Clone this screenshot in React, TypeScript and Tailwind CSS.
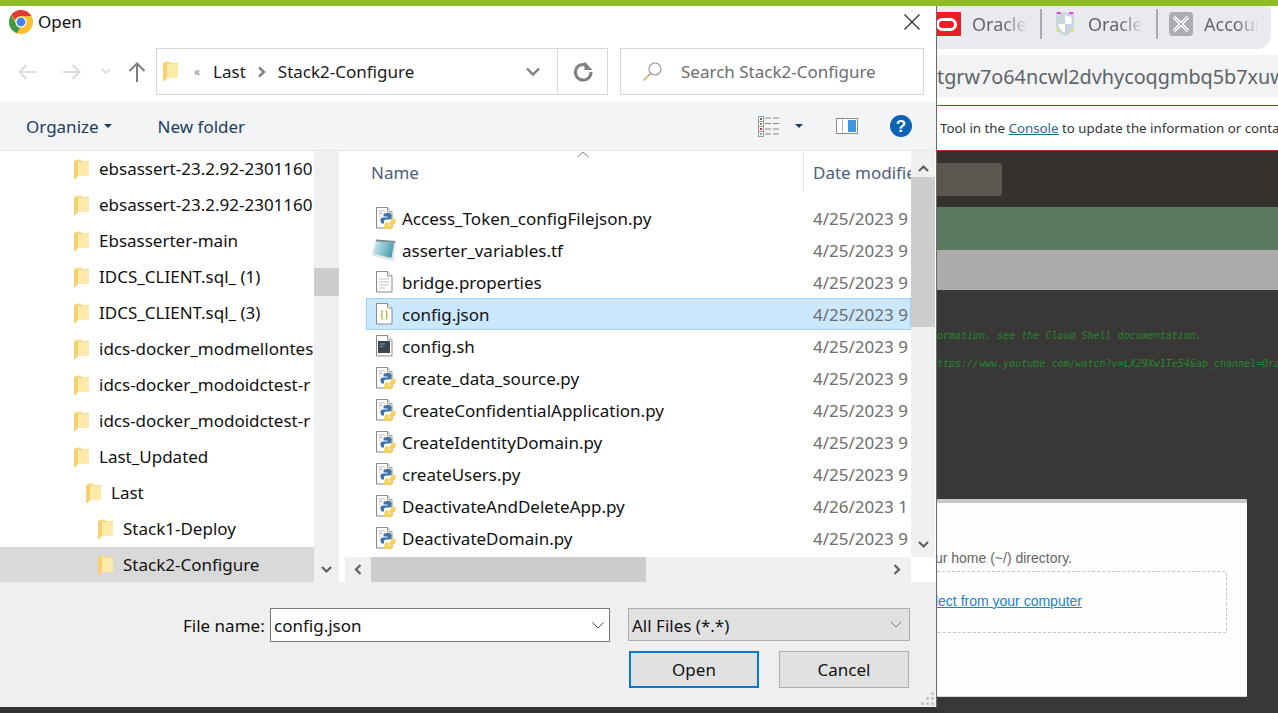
const treeItems = [
  { name: "ebsassert-23.2.92-2301160", indent: 0 },
  { name: "ebsassert-23.2.92-2301160", indent: 0 },
  { name: "Ebsasserter-main", indent: 0 },
  { name: "IDCS_CLIENT.sql_ (1)", indent: 0 },
  { name: "IDCS_CLIENT.sql_ (3)", indent: 0 },
  { name: "idcs-docker_modmellontes", indent: 0 },
  { name: "idcs-docker_modoidctest-r", indent: 0 },
  { name: "idcs-docker_modoidctest-r", indent: 0 },
  { name: "Last_Updated", indent: 0 },
  { name: "Last", indent: 1 },
  { name: "Stack1-Deploy", indent: 2 },
  { name: "Stack2-Configure", indent: 2, selected: true },
];

const files = [
  { name: "Access_Token_configFilejson.py", date: "4/25/2023 9", kind: "py" },
  { name: "asserter_variables.tf", date: "4/25/2023 9", kind: "tf" },
  { name: "bridge.properties", date: "4/25/2023 9", kind: "txt" },
  { name: "config.json", date: "4/25/2023 9", kind: "json", selected: true },
  { name: "config.sh", date: "4/25/2023 9", kind: "sh" },
  { name: "create_data_source.py", date: "4/25/2023 9", kind: "py" },
  { name: "CreateConfidentialApplication.py", date: "4/25/2023 9", kind: "py" },
  { name: "CreateIdentityDomain.py", date: "4/25/2023 9", kind: "py" },
  { name: "createUsers.py", date: "4/25/2023 9", kind: "py" },
  { name: "DeactivateAndDeleteApp.py", date: "4/26/2023 1", kind: "py" },
  { name: "DeactivateDomain.py", date: "4/25/2023 9", kind: "py" },
];

function ChromeIcon() {
  return (
    <svg width="24" height="24" viewBox="0 0 24 24" className="shrink-0">
      <circle cx="12" cy="12" r="12" fill="#fbc02d" />
      <path d="M12 0a12 12 0 0 1 10.400 6H12a6 6 0 0 0-5.600 3.800L2.300 4.900A12 12 0 0 1 12 0z" fill="#e53935" />
      <path d="M2.300 4.900l4.600 8.600a5.500 5.500 0 0 0 4 4.300L8 23.300A12 12 0 0 1 2.300 4.900z" fill="#3d9b46" />
      <circle cx="12" cy="12" r="5.600" fill="#fff" />
      <circle cx="12" cy="12" r="4.400" fill="#3f82ee" />
    </svg>
  );
}

function FolderIcon() {
  return (
    <svg width="15" height="21" viewBox="0 0 15 21" className="shrink-0">
      <path d="M3 .5h4l1 1.500h7v15H3z" fill="#f7dc8e" />
      <path d="M4 3h11v14H4z" fill="#fde9a8" />
      <path d="M0 2 4 .5V17L1 20.500 0 20z" fill="#f6d170" />
    </svg>
  );
}

function PageOutline({ children }: { children?: React.ReactNode }) {
  return (
    <svg width="24" height="24" viewBox="0 0 24 24" className="shrink-0">
      <path d="M2.500 1.500h11l4.500 4.500v16H2.500z" fill="#fff" stroke="#8a8a8a" />
      <path d="M13.500 1.500v4.500h4.500" fill="#f0f0f0" stroke="#9a9a9a" />
      {children}
    </svg>
  );
}

const PY_HALF =
  "M13.500 8c-2 0-3 .7-3 2v1.500h4v1H9.500c-1.500 0-2 1.200-2 3s.7 3 2 3H11v-2c0-1.200.8-2 2-2h3.500c1 0 2-.8 2-2V10c0-1.300-1.500-2-3-2z";

function FileIcon({ kind }: { kind: string }) {
  if (kind === "py") {
    return (
      <PageOutline>
        <path d="M5 5h6M5 7.500h4M5 10h2" stroke="#b4b4b4" />
        <g transform="translate(-1 -1)">
          <path d={PY_HALF} fill="#3a74a8" />
          <path d={PY_HALF} fill="#f7d34a" transform="rotate(180 15 16)" />
        </g>
      </PageOutline>
    );
  }
  if (kind === "tf") {
    return (
      <svg width="26" height="24" viewBox="0 0 26 24" className="shrink-0 -ml-[2px]">
        <defs>
          <linearGradient id="pad" x1="0" y1="0" x2="1" y2="0.300">
            <stop offset="0" stopColor="#cdeef0" />
            <stop offset="1" stopColor="#4f9fb2" />
          </linearGradient>
        </defs>
        <path d="M4 2 23.500 3.500 21 23 .5 17z" fill="#e6e9ea" stroke="#c3cdd0" strokeWidth="0.500" />
        <path d="M4.500 3.500 22 5 19.500 20 2 16z" fill="url(#pad)" />
        <path d="M4 1.500 23.500 3 23 5 4 3.500z" fill="#7b8f96" />
      </svg>
    );
  }
  if (kind === "txt") {
    return (
      <PageOutline>
        <path d="M5 9h10M5 12h10M5 15h10M5 18h6" stroke="#c4c4c4" />
      </PageOutline>
    );
  }
  if (kind === "json") {
    return (
      <PageOutline>
        <path
          d="M9 8.500c-1.500 0-1 1.300-1 2.400 0 1-.4 1.700-1.200 1.900.8.200 1.200.9 1.200 1.900s-.5 2.400 1 2.400M11.500 8.500c1.500 0 1 1.300 1 2.400 0 1 .4 1.700 1.200 1.900-.8.200-1.200.9-1.200 1.900s.5 2.400-1 2.400"
          fill="none"
          stroke="#b5b02a"
          strokeWidth="1.200"
        />
      </PageOutline>
    );
  }
  return (
    <PageOutline>
      <path d="M4 7h12v12H4z" fill="#37474f" />
      <path d="M6 10h5M6 12.500h3" stroke="#90a4ae" />
    </PageOutline>
  );
}

function Chevron({ dir, color = "#606060" }: { dir: "up" | "down" | "left" | "right"; color?: string }) {
  const d = {
    up: "M2 8l4.500-4.500L11 8",
    down: "M2 4l4.500 4.500L11 4",
    left: "M8.500 2 4 6.500 8.500 11",
    right: "M4.500 2 9 6.500 4.500 11",
  }[dir];
  return (
    <svg width="13" height="13" viewBox="0 0 13 13" className="shrink-0">
      <path d={d} fill="none" stroke={color} strokeWidth="2.200" />
    </svg>
  );
}

function NavBar() {
  return (
    <div className="h-[47px] flex items-center">
      <svg width="20" height="18" viewBox="0 0 20 18" className="ml-[17px]">
        <path d="M19 9H3M9.500 2 2.500 9l7 7" fill="none" stroke="#dcdcdc" strokeWidth="2" />
      </svg>
      <svg width="20" height="18" viewBox="0 0 20 18" className="ml-[25px]">
        <path d="M1 9h16M10.500 2l7 7-7 7" fill="none" stroke="#dcdcdc" strokeWidth="2" />
      </svg>
      <svg width="10" height="7" viewBox="0 0 10 7" className="ml-[19px]">
        <path d="M1 1l4 4 4-4" fill="none" stroke="#dcdcdc" strokeWidth="1.800" />
      </svg>
      <svg width="18" height="22" viewBox="0 0 18 22" className="ml-[17px]">
        <path d="M9 21V3M1.500 10 9 2.500 16.500 10" fill="none" stroke="#808080" strokeWidth="2" />
      </svg>
      <div className="ml-[10px] w-[452px] h-[47px] border border-[#d9d9d9] flex items-center">
        <div className="ml-[6px]">
          <FolderIcon />
        </div>
        <span className="ml-[16px] text-[12px] text-[#808080] leading-none">«</span>
        <span className="ml-[13px] text-[#1a1a1a]">Last</span>
        <svg width="10" height="12" viewBox="0 0 10 12" className="ml-[11px]">
          <path d="M2 1.500 7 6l-5 4.500" fill="none" stroke="#808080" strokeWidth="2.400" />
        </svg>
        <span className="ml-[11px] text-[#1a1a1a]">Stack2-Configure</span>
        <svg width="14" height="10" viewBox="0 0 14 10" className="ml-auto mr-[17px]">
          <path d="M1 1.500 7 7.500l6-6" fill="none" stroke="#808080" strokeWidth="2.400" />
        </svg>
        <div className="w-[50px] h-full border-l border-[#d9d9d9] flex items-center justify-center">
          <svg width="22" height="22" viewBox="0 0 22 22">
            <path d="M14.500 4.200A7.800 7.800 0 1 0 19 11" fill="none" stroke="#808080" strokeWidth="3" />
            <path d="M12.500 .5v8.500h8z" fill="#808080" />
          </svg>
        </div>
      </div>
      <div className="ml-[12px] w-[304px] h-[47px] border border-[#d9d9d9] flex items-center">
        <svg width="21" height="21" viewBox="0 0 21 21" className="ml-[21px]">
          <circle cx="13" cy="8" r="6" fill="none" stroke="#9a9a9a" strokeWidth="1.200" />
          <path d="M8.500 12.500 1.500 19.500" stroke="#d9a06a" strokeWidth="1.600" />
        </svg>
        <span className="ml-[18px] text-[#6d6d6d]">Search Stack2-Configure</span>
      </div>
    </div>
  );
}

function Toolbar() {
  return (
    <div className="h-[49px] bg-[#f3f4f6] border-b border-[#e6e6e6] flex items-center">
      <span className="ml-[26px] pt-[2px] text-[#1e3a5f]">Organize</span>
      <span className="ml-[5px] w-0 h-0 border-x-[4px] border-x-transparent border-t-[4px] border-t-[#1e3a5f]" />
      <span className="ml-[46px] pt-[2px] text-[#1e3a5f]">New folder</span>
      <svg width="23" height="21" viewBox="0 0 23 21" className="ml-auto">
        <rect x="0.500" y="0.500" width="5" height="5" fill="#fff" stroke="#9a9a9a" />
        <rect x="0.500" y="5.500" width="5" height="5" fill="#fff" stroke="#9a9a9a" />
        <rect x="0.500" y="10.500" width="5" height="5" fill="#fff" stroke="#9a9a9a" />
        <rect x="0.500" y="15.500" width="5" height="5" fill="#fff" stroke="#9a9a9a" />
        <rect x="2" y="2" width="2" height="2" fill="#3a74a8" />
        <rect x="2" y="7" width="2" height="2" fill="#8f8f2a" />
        <rect x="2" y="12" width="2" height="2" fill="#b03a2e" />
        <rect x="2" y="17" width="2" height="2" fill="#8aa08a" />
        <path d="M7 2h6M15 2h6M7 7.500h6M15 7.500h6M7 13h6M15 13h6M7 18h6M15 18h6" stroke="#8a8a8a" />
      </svg>
      <span className="ml-[14px] w-0 h-0 border-x-[4px] border-x-transparent border-t-[4px] border-t-[#1e3a5f]" />
      <svg width="22" height="16" viewBox="0 0 22 16" className="ml-[33px]">
        <rect x="0.500" y="0.500" width="21" height="15" fill="#fff" stroke="#8c8c8c" />
        <rect x="12" y="2" width="8" height="12" fill="#3d97e0" />
        <path d="M6.500 1v14" stroke="#b8b8b8" />
      </svg>
      <div className="ml-[32px] mr-[24px] w-[22px] h-[22px] rounded-full bg-[#0b63b5] flex items-center justify-center text-white text-[17px] font-bold font-['Liberation_Sans',sans-serif] leading-none">
        ?
      </div>
    </div>
  );
}

function TreePane() {
  return (
    <div className="w-[339px] flex shrink-0">
      <div className="w-[314px] overflow-hidden">
        {treeItems.map((item, i) => (
          <div
            key={i}
            className={`h-[36px] flex items-center whitespace-nowrap ${item.selected ? "bg-[#d9d9d9]" : ""}`}
          >
            <div className={item.indent === 2 ? "ml-[98px]" : item.indent === 1 ? "ml-[86px]" : "ml-[74px]"}>
              <FolderIcon />
            </div>
            <span className="ml-[10px] text-[#111]">{item.name}</span>
          </div>
        ))}
      </div>
      <div className="w-[25px] bg-[#f0f0f0] flex flex-col items-center">
        <div className="h-[117px]" />
        <div className="h-[28px] w-full bg-[#cdcdcd]" />
        <div className="mt-auto mb-[6px]">
          <Chevron dir="down" />
        </div>
      </div>
    </div>
  );
}

function FilePane() {
  return (
    <div className="flex-1 min-w-0 flex flex-col pl-[6px]">
      <div className="flex flex-1 min-h-0">
        <div className="w-[566px] flex flex-col">
          <div className="h-[51px] shrink-0 flex relative">
            <span className="absolute left-[232px] top-0">
              <svg width="12" height="7" viewBox="0 0 12 7">
                <path d="M.5 6 6 1l5.500 5" fill="none" stroke="#808080" />
              </svg>
            </span>
            <span className="ml-[26px] mt-[9px] text-[#4c607a]">Name</span>
            <div className="ml-auto w-[108px] h-[41px] border-l border-[#e5e5e5] pl-[9px] pt-[9px] overflow-hidden whitespace-nowrap text-[#4c607a]">
              Date modified
            </div>
          </div>
          <div className="flex-1 min-h-0 overflow-hidden pl-[21px]">
            {files.map((f) => (
              <div
                key={f.name}
                className={`h-[32px] flex items-center border whitespace-nowrap ${
                  f.selected ? "bg-[#cce8ff] border-[#99d1ff]" : "border-transparent"
                }`}
              >
                <div className="ml-[7px] w-[24px] shrink-0">
                  <FileIcon kind={f.kind} />
                </div>
                <span className="ml-[4px] pt-[2px] text-[#111]">{f.name}</span>
                <span className="ml-auto w-[97px] pt-[2px] overflow-hidden text-[#6d6d6d]">{f.date}</span>
              </div>
            ))}
          </div>
        </div>
        <div className="w-[24px] bg-[#f0f0f0] flex flex-col items-center shrink-0">
          <div className="h-[26px] flex items-end pb-[1px]">
            <Chevron dir="up" />
          </div>
          <div className="h-[150px] w-full bg-[#cdcdcd]" />
          <div className="mt-auto mb-[6px]">
            <Chevron dir="down" />
          </div>
        </div>
      </div>
      <div className="h-[25px] shrink-0 flex">
        <div className="w-[566px] bg-[#f0f0f0] flex items-center">
          <div className="w-[26px] flex justify-center">
            <Chevron dir="left" />
          </div>
          <div className="w-[275px] h-full bg-[#cdcdcd]" />
          <div className="ml-auto mr-[8px]">
            <Chevron dir="right" />
          </div>
        </div>
      </div>
    </div>
  );
}

function Footer() {
  return (
    <div className="h-[125px] bg-[#efefef] pt-[26px] relative">
      <div className="flex items-start">
        <span className="ml-[183px] w-[79px] h-[34px] flex items-center pt-[1px] text-[#111] whitespace-nowrap">File name:</span>
        <div className="ml-[8px] w-[340px] h-[34px] bg-white border border-[#7a7a7a] flex items-center pl-[3px]">
          <span className="pt-[2px] text-[#111]">config.json</span>
          <svg width="12" height="7" viewBox="0 0 12 7" className="ml-auto mr-[5px]">
            <path d="M.5.500 6 6 11.500.500" fill="none" stroke="#555" />
          </svg>
        </div>
        <div className="ml-[18px] w-[282px] h-[33px] bg-[#e1e1e1] border border-[#adadad] flex items-center pl-[3px]">
          <span className="pt-[2px] text-[#111]">All Files (*.*)</span>
          <svg width="12" height="7" viewBox="0 0 12 7" className="ml-auto mr-[7px]">
            <path d="M.5.500 6 6 11.500.500" fill="none" stroke="#7a7a7a" />
          </svg>
        </div>
      </div>
      <div className="mt-[9px] flex justify-end pr-[27px] gap-[20px]">
        <button className="w-[130px] h-[37px] pt-[1px] bg-[#e1e1e1] border-2 border-[#0078d7] text-[#111]">Open</button>
        <button className="w-[130px] h-[37px] pt-[1px] bg-[#e1e1e1] border border-[#adadad] text-[#111]">Cancel</button>
      </div>
      <svg width="14" height="14" viewBox="0 0 14 14" className="absolute right-[1px] bottom-[1px]">
        <path d="M10 0h3v3h-3zM5 5h3v3H5zM10 5h3v3h-3zM0 10h3v3H0zM5 10h3v3H5zM10 10h3v3h-3z" fill="#c8c8c8" />
      </svg>
    </div>
  );
}

function Dialog() {
  return (
    <div className="w-[937px] h-[701px] shrink-0 bg-white border-r border-[#6a6a6a] flex flex-col font-['Noto_Sans',sans-serif] text-[17px]">
      <div className="h-[42px] shrink-0 flex items-center pl-[9px] pb-[10px] pr-[16px]">
        <ChromeIcon />
        <span className="ml-[5px] text-[#111]">Open</span>
        <svg width="16" height="16" viewBox="0 0 16 16" className="ml-auto">
          <path d="M.5.500l15 15M15.500.500l-15 15" stroke="#222" strokeWidth="1.100" />
        </svg>
      </div>
      <NavBar />
      <div className="h-[7px] shrink-0" />
      <Toolbar />
      <div className="flex-1 min-h-0 flex">
        <TreePane />
        <FilePane />
      </div>
      <Footer />
    </div>
  );
}

function BrowserTab({ label, icon, sep }: { label: string; icon: React.ReactNode; sep?: boolean }) {
  return (
    <div className="flex items-center">
      {icon}
      <span className="ml-[11px] text-[18px] w-[53px] overflow-hidden whitespace-nowrap bg-[linear-gradient(90deg,#5f6368_60%,#d5d7da)] bg-clip-text text-transparent">
        {label}
      </span>
      {sep && <div className="ml-[15px] mr-[12px] w-[2px] h-[30px] bg-[#a8abaf]" />}
    </div>
  );
}

function BrowserPane() {
  return (
    <div className="flex-1 min-w-0 flex flex-col overflow-hidden bg-[#393837] font-['Noto_Sans',sans-serif]">
      <div className="bg-white shrink-0">
        <div className="mr-[7px] h-[43px] bg-[#e8eaed] rounded-br-[14px] flex items-center pb-[7px]">
          <BrowserTab
            sep
            label="Oracle"
            icon={
              <div className="w-[24px] h-[24px] bg-[#ee1c25] flex items-center justify-center shrink-0 overflow-hidden">
                <div className="w-[21px] h-[13px] rounded-[7px] border-[3px] border-white -ml-[6px]" />
              </div>
            }
          />
          <BrowserTab
            sep
            label="Oracle"
            icon={
              <svg width="22" height="26" viewBox="0 0 22 26" className="shrink-0 mr-[1px]">
                <path d="M11 1 20 4v9c0 6-4 10-9 12-5-2-9-6-9-12V4z" fill="#c7d6dd" />
                <path d="M3 1h4v2H2zM15 1h4l1 2h-5z" fill="#e64fd0" />
                <path d="M2 18h2l1 3H3zM18 18h2l-1 3h-2z" fill="#d9e84a" />
                <path d="M11 4 17.500 6v7H11zM11 13H4.500c0 4 3 7 6.500 9z" fill="#fff" />
              </svg>
            }
          />
          <BrowserTab
            label="Accour"
            icon={
              <svg width="24" height="24" viewBox="0 0 24 24" className="shrink-0 -ml-[1px]">
                <rect width="24" height="24" rx="4" fill="#a9adb1" />
                <path d="M5 5l14 14M19 5 5 19" stroke="#fff" strokeWidth="3.500" />
                <path d="M5 5l14 14M19 5 5 19" stroke="#a9adb1" strokeWidth="1" />
              </svg>
            }
          />
        </div>
        <div className="h-[6px]" />
        <div className="h-[42px] bg-[#f1f3f4] flex items-center pt-[2px] text-[19.800px] text-[#5f6368] whitespace-nowrap overflow-hidden">
          tgrw7o64ncwl2dvhycoqgmbq5b7xuw
        </div>
        <div className="h-[8px]" />
      </div>
      <div className="h-[46px] shrink-0 bg-white border-y border-[#b5311e] flex items-center pl-[3px] pt-[2px] text-[13.300px] text-[#333] whitespace-nowrap overflow-hidden">
        Tool in the&nbsp;<span className="text-[#0b7390] underline">Console</span>&nbsp;to update the information or contact
      </div>
      <div className="h-[56px] shrink-0 bg-[#35312e] pt-[12px]">
        <div className="w-[65px] h-[33px] bg-[#5a5650] rounded-r-[3px]" />
      </div>
      <div className="h-[43px] shrink-0 bg-[#5b7a60]" />
      <div className="h-[40px] shrink-0 bg-[#acabaa]" />
      <div className="pt-[39px] font-['DejaVu_Sans_Mono',monospace] text-[10px] italic leading-[14px] text-[#26872f] whitespace-nowrap">
        <div>ormation, see the Cloud Shell documentation.</div>
        <div className="mt-[14px]">ttps://www.youtube.com/watch?v=LX29Xw1Te54&amp;ab_channel=Oracle</div>
      </div>
      <div className="mt-[128px] w-[310px] h-[198px] bg-[#fdfdfd] border-t-[4px] border-b border-t-[#c8c8c8] border-b-[#d8d8d8] overflow-hidden font-['Liberation_Sans',sans-serif] text-[14px] rounded-[1px] shrink-0">
        <div className="w-[135px] mt-[45px] flex justify-end whitespace-nowrap text-[#666]">
          Upload to your home (~/) directory.
        </div>
        <div className="mt-[2px] w-[290px] h-[62px] border border-l-0 border-dashed border-[#c4c4c4] rounded-r-[2px] flex items-center pb-[1px]">
          <div className="w-[145px] flex justify-end whitespace-nowrap text-[#1f7fd0] underline">
            or select from your computer
          </div>
        </div>
      </div>
    </div>
  );
}

export default function App() {
  return (
    <div className="w-[1278px] h-[713px] flex flex-col overflow-hidden bg-[#333333]">
      <div className="h-[6px] shrink-0 bg-[#8dbd26]" />
      <div className="flex-1 min-h-0 flex items-start">
        <Dialog />
        <div className="h-full flex-1 min-w-0 flex">
          <BrowserPane />
        </div>
      </div>
    </div>
  );
}
